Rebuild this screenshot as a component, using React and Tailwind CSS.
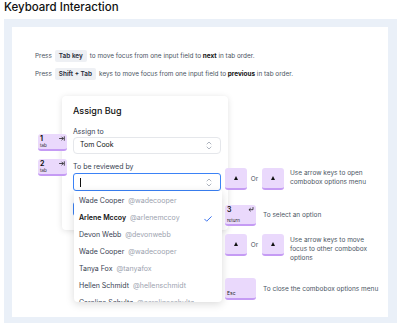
import React from 'react';

const people = [
  { name: 'Wade Cooper', handle: '@wadecooper' },
  { name: 'Arlene Mccoy', handle: '@arlenemccoy', selected: true },
  { name: 'Devon Webb', handle: '@devonwebb' },
  { name: 'Wade Cooper', handle: '@wadecooper' },
  { name: 'Tanya Fox', handle: '@tanyafox' },
  { name: 'Hellen Schmidt', handle: '@hellenschmidt' },
  { name: 'Caroline Schultz', handle: '@carolineschultz' },
];

const UpDown = () => (
  <svg width="6" height="9" viewBox="0 0 6 9" fill="none" className="text-gray-400">
    <path d="M1 3l2-2 2 2M1 6l2 2 2-2" stroke="currentColor" strokeWidth="0.8" strokeLinecap="round" strokeLinejoin="round" />
  </svg>
);

const TabArrow = () => (
  <svg width="6" height="5" viewBox="0 0 6 5" fill="none">
    <path d="M0.5 2.5h3.6M2.8 1l1.5 1.5L2.8 4M5.3 0.7v3.6" stroke="#222" strokeWidth="0.8" strokeLinecap="round" strokeLinejoin="round" />
  </svg>
);

const ReturnArrow = () => (
  <svg width="6" height="5" viewBox="0 0 6 5" fill="none">
    <path d="M5 0.5v2.2H1.2M2.4 1.4L1 2.7l1.4 1.3" stroke="#222" strokeWidth="0.8" strokeLinecap="round" strokeLinejoin="round" />
  </svg>
);

// little purple keycap
const Key = ({ className = '', children }) => (
  <div className={`relative rounded-[3px] bg-[#ead9fc] border-b-2 border-[#c59bf4] ${className}`}>
    {children}
  </div>
);

const ArrowKey = () => (
  <Key className="w-[22px] h-[22px] flex items-center justify-center">
    <span className="block w-0 h-0 border-l-[2.5px] border-r-[2.5px] border-b-[4px] border-l-transparent border-r-transparent border-b-[#111]" />
  </Key>
);

const Chip = ({ children }) => (
  <span className="inline-flex items-center h-[12px] px-[4px] mx-[3px] rounded-[2px] bg-[#eef0f4] text-[#1f2937] font-semibold">
    {children}
  </span>
);

export default function App() {
  return (
    <div className="w-[401px] h-[326px] bg-white font-['Inter',sans-serif] overflow-hidden">
      <h1 className="pl-1 text-[11.5px] leading-[14px] font-medium text-[#111] mb-[5px]">Keyboard Interaction</h1>

      <div className="mx-1 bg-[#eaf0f8] pl-2 pr-[9px] pt-2 pb-[6px]">
        <div className="bg-white h-[290px] pt-[23px]">
          <div className="pl-[23px] text-[6.4px] text-[#4b5563] space-y-[6px]">
            <p className="flex items-center leading-[12px]">
              Press <Chip>Tab key</Chip> to move focus from one input field to&nbsp;<b className="text-[#111]">next</b>&nbsp;in tab order.
            </p>
            <p className="flex items-center leading-[12px]">
              Press <Chip>Shift + Tab</Chip> keys to move focus from one input field to&nbsp;<b className="text-[#111]">previous</b>&nbsp;in tab order.
            </p>
          </div>

          <div className="flex mt-[16px] ml-[26px]">
            {/* tab keys */}
            <div className="relative z-10 flex flex-col gap-[8px] mt-[38px] w-[29px]">
              {['1', '2'].map((n) => (
                <Key key={n} className="w-[29px] h-[17px]">
                  <span className="absolute left-[2px] top-[1px] text-[7px] leading-[8px] font-bold text-[#111]">{n}</span>
                  <span className="absolute right-[2px] top-[2px]"><TabArrow /></span>
                  <span className="absolute left-[2px] bottom-[1px] text-[4.5px] leading-[5px] text-[#222]">tab</span>
                </Key>
              ))}
            </div>

            {/* combobox card */}
            <div className="relative -ml-[5px] w-[166px] h-[134px] bg-white rounded-[4px] shadow-[0_1px_6px_rgba(0,0,0,0.12)] pl-[11px] pr-[7px] pt-[9px]">
              <div className="text-[9px] leading-[12px] font-medium text-[#111]">Assign Bug</div>
              <div className="mt-[10px] text-[7px] leading-[9px] text-[#374151]">Assign to</div>
              <div className="mt-[1px] h-[17px] rounded-[4px] border border-[#e5e7eb] flex items-center justify-between pl-[6px] pr-[8px] text-[7px] text-[#111]">
                <span>Tom Cook</span>
                <UpDown />
              </div>
              <div className="mt-[8px] text-[7px] leading-[9px] text-[#374151]">To be reviewed by</div>
              <div className="relative mt-[2px]">
                <div className="h-[18px] rounded-[3px] border border-[#3b82f6] flex items-center justify-between pl-[6px] pr-[8px]">
                  <span className="block w-px h-[9px] bg-[#111]" />
                  <UpDown />
                </div>
                <div className="mt-[11px] w-[40px] h-[14px] rounded-[3px] bg-[#3b82f6]" />

                {/* options menu */}
                <div className="absolute left-[1px] top-[18px] w-[148px] h-[111px] overflow-hidden bg-white rounded-b-[4px] shadow-[0_2px_8px_rgba(0,0,0,0.15)] pt-[2px]">
                  {people.map((p, i) => (
                    <div key={i} className="h-[17px] flex items-center justify-between pl-[5px] pr-[10px] text-[7px]">
                      <span>
                        <span className={p.selected ? 'font-semibold text-[#111]' : 'text-[#374151]'}>{p.name}</span>
                        <span className="ml-[4px] text-[#9ca3af]">{p.handle}</span>
                      </span>
                      {p.selected && (
                        <svg width="8" height="6" viewBox="0 0 8 6" fill="none">
                          <path d="M0.7 3.2l2 2L7.3 0.7" stroke="#2563eb" strokeWidth="0.9" strokeLinecap="round" strokeLinejoin="round" />
                        </svg>
                      )}
                    </div>
                  ))}
                </div>
              </div>
            </div>

            {/* right column: keys + hints */}
            <div className="relative z-10 -ml-[3px] mt-[72px] text-[6.5px] leading-[9px] text-[#4b5563]">
              <div className="flex items-start">
                <ArrowKey />
                <span className="w-[15px] mt-[7px] text-center">Or</span>
                <ArrowKey />
                <p className="ml-[6px] mt-[1px]">Use arrow keys to open<br />combobox options menu</p>
              </div>

              <div className="flex items-center mt-[15px]">
                <Key className="w-[31px] h-[21px]">
                  <span className="absolute left-[2px] top-[1px] text-[7px] leading-[8px] font-semibold text-[#111]">3</span>
                  <span className="absolute right-[2px] top-[2px]"><ReturnArrow /></span>
                  <span className="absolute left-[2px] bottom-[1px] text-[4.5px] leading-[5px] text-[#222]">return</span>
                </Key>
                <p className="ml-[7px]">To select an option</p>
              </div>

              <div className="flex items-start mt-[8px]">
                <ArrowKey />
                <span className="w-[15px] mt-[7px] text-center">Or</span>
                <ArrowKey />
                <p className="ml-[6px] mt-[2px]">Use arrow keys to move<br />focus to other combobox<br />options</p>
              </div>

              <div className="flex items-center mt-[15px]">
                <Key className="w-[31px] h-[22px]">
                  <span className="absolute left-[2px] bottom-[2px] text-[5px] leading-[5px] text-[#222]">Esc</span>
                </Key>
                <p className="ml-[7px]">To close the combobox options menu</p>
              </div>
            </div>
          </div>
        </div>
      </div>
    </div>
  );
}
